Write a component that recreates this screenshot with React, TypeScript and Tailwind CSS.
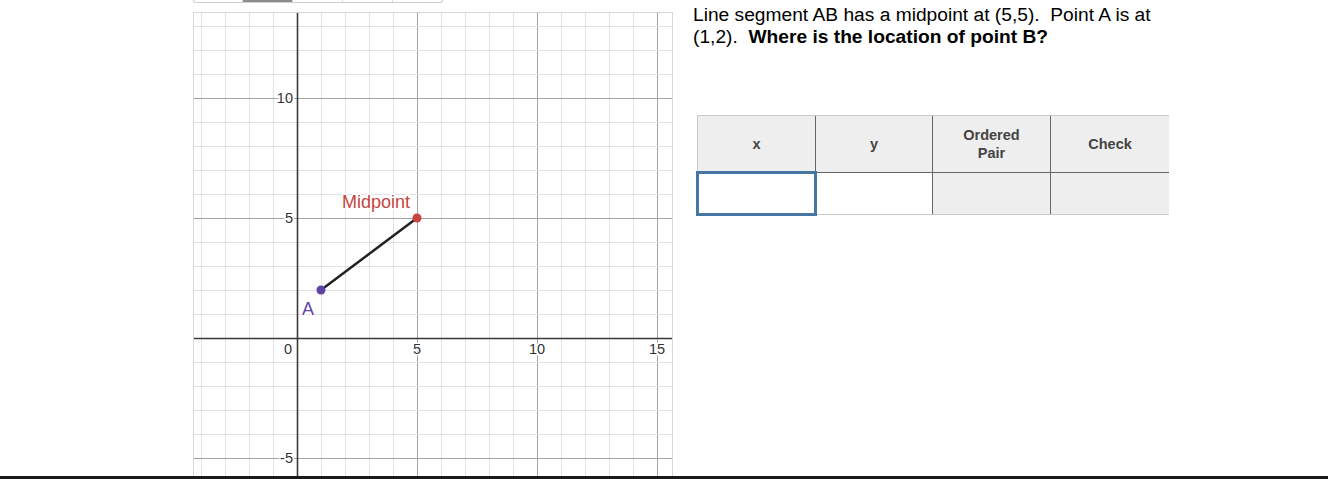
import React from 'react';

const S = 24;
const OX = 104;
const OY = 326;
const W = 480;
const H = 464;

function Graph() {
  const xs: number[] = [];
  for (let i = -4; i <= 15; i++) xs.push(i);
  const ys: number[] = [];
  for (let j = -5; j <= 13; j++) ys.push(j);

  const px = (x: number) => OX + x * S;
  const py = (y: number) => OY - y * S;

  const label = {
    fontFamily: '"Liberation Sans", Arial, sans-serif',
    fontSize: 14.5,
    fill: '#333',
    stroke: '#fff',
    strokeWidth: 3,
    paintOrder: 'stroke',
  } as const;

  const pointLabel = (fill: string) =>
    ({
      fontFamily: '"Liberation Sans", Arial, sans-serif',
      fontSize: 18,
      fill,
      stroke: '#fff',
      strokeWidth: 3,
      paintOrder: 'stroke',
    } as const);

  return (
    <svg width={W} height={H} className="block">
      <rect x={0.5} y={0.5} width={W - 1} height={H} fill="#fff" stroke="#d6d6d6" />
      {xs.map((x) =>
        x === 0 ? null : (
          <line
            key={'vx' + x}
            x1={px(x) + 0.5}
            x2={px(x) + 0.5}
            y1={1}
            y2={H}
            stroke={x % 5 === 0 ? '#a3a3a3' : '#e2e2e2'}
            strokeWidth={1}
          />
        )
      )}
      {ys.map((y) =>
        y === 0 ? null : (
          <line
            key={'hy' + y}
            y1={py(y) + 0.5}
            y2={py(y) + 0.5}
            x1={1}
            x2={W - 1}
            stroke={y % 5 === 0 ? '#a3a3a3' : '#e2e2e2'}
            strokeWidth={1}
          />
        )
      )}
      <line x1={OX + 0.5} x2={OX + 0.5} y1={1} y2={H} stroke="#3a3a3a" strokeWidth={1.6} />
      <line x1={1} x2={W - 1} y1={OY + 0.5} y2={OY + 0.5} stroke="#3a3a3a" strokeWidth={1.6} />

      {/* y labels */}
      <text x={OX - 4} y={py(10) + 5} textAnchor="end" style={label}>10</text>
      <text x={OX - 4} y={py(5) + 5} textAnchor="end" style={label}>5</text>
      <text x={OX - 4} y={py(-5) + 5} textAnchor="end" style={label}>-5</text>
      {/* x labels */}
      <text x={OX - 9} y={OY + 16} textAnchor="middle" style={label}>0</text>
      <text x={px(5)} y={OY + 16} textAnchor="middle" style={label}>5</text>
      <text x={px(10)} y={OY + 16} textAnchor="middle" style={label}>10</text>
      <text x={px(15)} y={OY + 16} textAnchor="middle" style={label}>15</text>

      {/* segment */}
      <line x1={px(1)} y1={py(2)} x2={px(5)} y2={py(5)} stroke="#222" strokeWidth={2.5} />
      <circle cx={px(1)} cy={py(2)} r={4.5} fill="#6042a6" />
      <circle cx={px(5)} cy={py(5)} r={4.5} fill="#c74440" />

      <text x={183} y={196} textAnchor="middle" style={pointLabel('#c74440')}>
        Midpoint
      </text>
      <text x={115} y={303} textAnchor="middle" style={pointLabel('#6042a6')}>
        A
      </text>
    </svg>
  );
}

export default function App() {
  return (
    <div className="w-[1328px] h-[479px] bg-white overflow-hidden flex flex-col font-['Liberation_Sans',Arial,sans-serif]">
      <div className="h-[476px] overflow-hidden flex">
        {/* Graph column */}
        <div className="ml-[193px] w-[480px] flex flex-col">
          <div className="w-[250px] h-[3px] flex border border-t-0 border-[#cfcfcf] rounded-b-[4px] overflow-hidden">
            <div className="w-[49px] border-r border-[#dcdcdc]" />
            <div className="w-[50px] bg-[#8c8c8c] border-r border-[#dcdcdc]" />
            <div className="w-[50px] border-r border-[#dcdcdc]" />
            <div className="w-[50px] border-r border-[#dcdcdc]" />
            <div className="flex-1" />
          </div>
          <div className="mt-[9px]">
            <Graph />
          </div>
        </div>

        {/* Question column */}
        <div className="ml-[20px] w-[476px] flex flex-col">
          <p className="pt-[4px] text-[19.2px] leading-[22px] text-black">
            Line segment AB has a midpoint at (5,5).&nbsp; Point A is at (1,2).&nbsp; <b>Where is the location of point B?</b>
          </p>
          <div className="mt-[67px] ml-[4px] w-[472px] grid grid-cols-[118px_117px_118px_118px] grid-rows-[57px_41px] border border-[#c9c9c9] text-[14.5px] leading-[18px] font-bold text-[#444]">
            <div className="bg-[#eeeeee] border-r border-b border-[#666] flex items-center justify-center">x</div>
            <div className="bg-[#eeeeee] border-r border-b border-[#666] flex items-center justify-center">y</div>
            <div className="bg-[#eeeeee] border-r border-b border-[#666] flex items-center justify-center text-center">
              Ordered
              <br />
              Pair
            </div>
            <div className="bg-[#eeeeee] border-b border-[#666] flex items-center justify-center">Check</div>
            <div className="relative bg-white border-r border-[#666]">
              <div className="absolute -left-[2px] -top-[2px] -right-[2px] -bottom-[2px] border-[3px] border-[#4676a2]" />
            </div>
            <div className="bg-white border-r border-[#666]" />
            <div className="bg-[#eeeeee] border-r border-[#666]" />
            <div className="bg-[#eeeeee]" />
          </div>
        </div>
      </div>
      <div className="h-[3px] bg-[#1a1a1a]" />
    </div>
  );
}
